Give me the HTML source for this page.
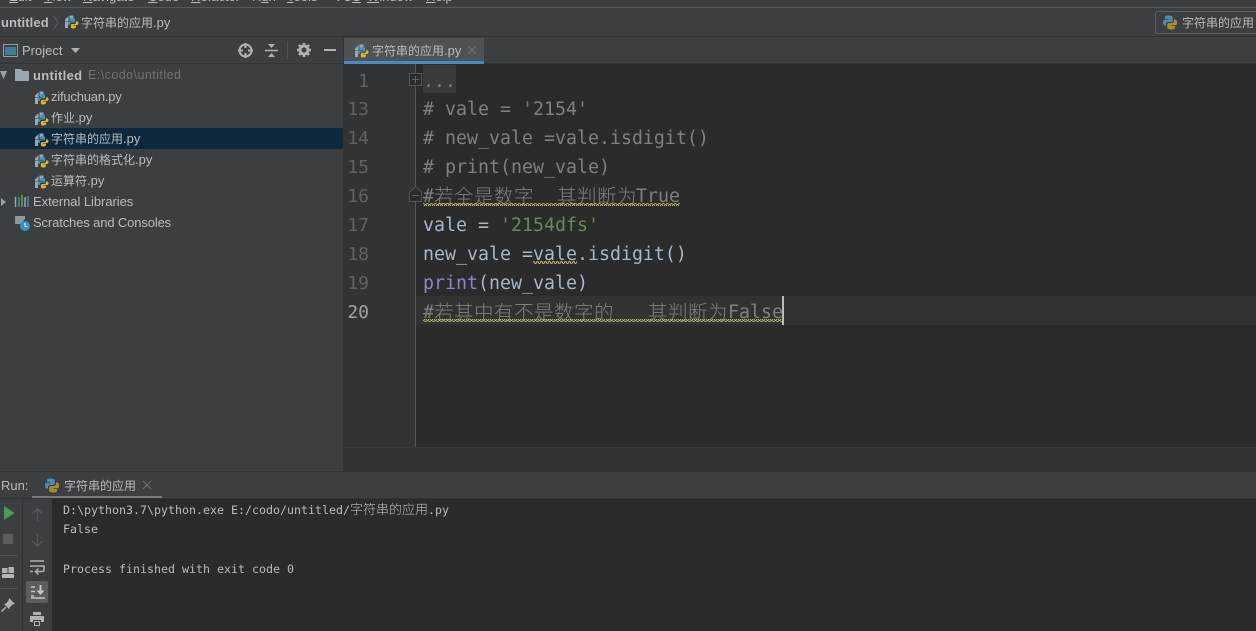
<!DOCTYPE html>
<html><head><meta charset="utf-8"><style>
html,body{margin:0;padding:0;width:1256px;height:631px;overflow:hidden;background:#3c3f41}
.a{position:absolute}
.t{position:absolute;white-space:pre;font-family:"Liberation Sans","Noto Sans CJK SC",sans-serif;font-size:13px;color:#bbb;line-height:21px;letter-spacing:0}
.c{font-size:12px;letter-spacing:0}
.r{position:absolute;left:423px;height:29px;line-height:29px;margin-top:1.500px;white-space:pre;font-family:"DejaVu Sans Mono",monospace;font-size:18.27px;color:#a9b7c6}
.r b{position:absolute;top:-1.500px;font-family:"Noto Sans CJK SC",sans-serif;font-size:19.5px;letter-spacing:.5px;color:#808080;font-weight:300}
.n{position:absolute;left:344px;width:25px;text-align:right;height:29px;line-height:29px;margin-top:1.500px;font-family:"DejaVu Sans Mono",monospace;font-size:18px;color:#606366}
.k{color:#808080}.s{color:#6a8759}.p{color:#8888c6}
.o{position:absolute;left:63px;white-space:pre;font-family:"DejaVu Sans Mono",monospace;font-size:11.63px;line-height:20px;color:#bbb}
.m{position:absolute;top:-11px;font-family:"Liberation Sans",sans-serif;font-size:13px;line-height:15px;color:#bbb;white-space:pre}
svg{position:absolute;overflow:visible}
</style></head><body>
<svg width="0" height="0" style="left:0;top:0"><defs>
<symbol id="py" viewBox="0 0 14 15"><path d="M5 0.5c-2.600 0-3 1-3 2v1.500h3.500v.7H1.500C0 4.700 0 6 0 7.500s.5 3 1.800 3H3V9c0-1.100.9-2 2-2h3c1 0 1.800-.8 1.800-1.800V2.500C9.800 1 8 .5 5 .5z" fill="#4d8bb8"/><path d="M9 14.500c2.600 0 3-1 3-2V11H8.500v-.7h4C14 10.300 14 9 14 7.500s-.5-3-1.800-3H11V6c0 1.100-.9 2-2 2H6c-1 0-1.800.8-1.800 1.800v2.700C4.200 14 6 14.500 9 14.500z" fill="#a88d2f"/></symbol>
<symbol id="f" viewBox="0 0 14 15"><path d="M0 5.500 3.500 2V7H0zM4.500 1.500H8.500V5.500H6C4.800 5.500 4.500 6.500 4.500 7.500H0V14H3V9.500h1.500z" fill="#9aa7b0"/><path d="M8 4c-2.200 0-3 .6-3 1.700V7h3v.5H4C3 7.500 3 8.500 3 9.500S3.500 11 4.300 11H5V10c0-.9.7-1.500 1.500-1.500h2.300c.8 0 1.300-.6 1.300-1.300V5.500C10.100 4.500 9.500 4 8 4z" fill="#3a95c8"/><path d="M8 14.500c2.200 0 3-.6 3-1.700V11.500H8V11h4c1 0 1.500-1 1.500-2s-.5-1.500-1.300-1.500H11V8.500C11 9.400 10.300 10 9.500 10H7.200C6.400 10 5.900 10.600 5.900 11.300v1.700C5.900 14 6.500 14.500 8 14.500z" fill="#e6b422"/></symbol>
<pattern id="w" width="4" height="3" patternUnits="userSpaceOnUse"><path d="M0 2.500 1 .5 2 .5 3 2.500 4 2.500" fill="none" stroke="#b5b565" stroke-width="1.100"/></pattern>
</defs></svg>

<!-- menu -->
<div class="a" style="left:0;top:0;width:1256px;height:7px;background:#3c3f41;overflow:hidden">
<span class="m" style="left:9px"><u>E</u>dit</span><span class="m" style="left:44px"><u>V</u>iew</span><span class="m" style="left:83px"><u>N</u>avigate</span><span class="m" style="left:148px"><u>C</u>ode</span><span class="m" style="left:191px"><u>R</u>efactor</span><span class="m" style="left:252px">R<u>u</u>n</span><span class="m" style="left:287px"><u>T</u>ools</span><span class="m" style="left:334px">VC<u>S</u></span><span class="m" style="left:367px"><u>W</u>indow</span><span class="m" style="left:426px"><u>H</u>elp</span>
</div>
<div class="a" style="left:0;top:7px;width:1256px;height:1px;background:#555758"></div>

<!-- nav -->
<div class="t" style="left:1px;top:12px;font-weight:700;letter-spacing:.1px">untitled</div>
<svg style="left:53px;top:15px" width="6" height="15"><path d="M.5 .5 5 7.500 .5 14.500" fill="none" stroke="#5f6264"/></svg>
<svg style="left:65px;top:14px" width="14" height="15"><use href="#f"/></svg>
<div class="t" style="left:81px;top:12px"><span class="c">字符串的应用</span>.py</div>
<div class="a" style="left:1155px;top:11px;width:110px;height:21px;border:1px solid #5e6162;border-radius:3px"></div>
<svg style="left:1163px;top:15px" width="14" height="15"><use href="#py"/></svg>
<div class="t" style="left:1182px;top:12px"><span class="c">字符串的应用</span></div>
<div class="a" style="left:0;top:36px;width:1256px;height:1px;background:#323232"></div>

<!-- project header -->
<svg style="left:3px;top:44px" width="15" height="13"><rect x=".5" y=".5" width="14" height="12" fill="#3c3f41" stroke="#9a9da0"/><rect x="2" y="3" width="11" height="8" fill="#3d7f9a"/></svg>
<div class="t" style="left:22px;top:40px">Project</div>
<svg style="left:71px;top:48px" width="9" height="5"><path d="M0 0H9L4.500 5z" fill="#afb1b3"/></svg>
<svg style="left:238px;top:43px" width="15" height="15"><circle cx="7.500" cy="7.500" r="6" fill="none" stroke="#afb1b3" stroke-width="2"/><path d="M7.500 0V5M7.500 10V15M0 7.500H5M10 7.500H15" stroke="#afb1b3" stroke-width="2"/></svg>
<svg style="left:265px;top:44px" width="13" height="13"><path d="M0 6.500H13" stroke="#afb1b3" stroke-width="1.500"/><path d="M3 0H10L6.500 4zM3 13H10L6.500 9z" fill="#afb1b3"/></svg>
<div class="a" style="left:287px;top:41px;width:1px;height:18px;background:#505355"></div>
<svg style="left:297px;top:43px" width="14" height="14"><circle cx="7" cy="7" r="4" fill="none" stroke="#afb1b3" stroke-width="3"/><path d="M7 0V3M7 11V14M0 7H3M11 7H14M2 2 4 4M10 10 12 12M12 2 10 4M4 10 2 12" stroke="#afb1b3" stroke-width="2.500"/></svg>
<div class="a" style="left:324px;top:49px;width:12px;height:2px;background:#afb1b3"></div>
<div class="a" style="left:0;top:63px;width:343px;height:1px;background:#323232"></div>

<!-- tree -->
<div class="a" style="left:0;top:128px;width:343px;height:21px;background:#0d293e"></div>
<svg style="left:0;top:71px" width="7" height="9"><path d="M0 0H7L3.500 8z" fill="#9da0a2"/></svg>
<svg style="left:15px;top:69px" width="14" height="12"><path d="M0 0H6L7.500 2H14V12H0z" fill="#9aa7b0"/></svg>
<div class="t" style="left:33px;top:65px;font-weight:700;letter-spacing:.3px">untitled</div>
<div class="t" style="left:88px;top:65px;color:#6f7274;font-size:12.500px;letter-spacing:.45px">E:\codo\untitled</div>
<svg style="left:35px;top:90px" width="14" height="15"><use href="#f"/></svg>
<div class="t" style="left:51px;top:86px;letter-spacing:-.2px">zifuchuan.py</div>
<svg style="left:35px;top:111px" width="14" height="15"><use href="#f"/></svg>
<div class="t" style="left:51px;top:107px"><span class="c">作业</span>.py</div>
<svg style="left:35px;top:132px" width="14" height="15"><use href="#f"/></svg>
<div class="t" style="left:51px;top:128px"><span class="c">字符串的应用</span>.py</div>
<svg style="left:35px;top:153px" width="14" height="15"><use href="#f"/></svg>
<div class="t" style="left:51px;top:149px"><span class="c">字符串的格式化</span>.py</div>
<svg style="left:35px;top:174px" width="14" height="15"><use href="#f"/></svg>
<div class="t" style="left:51px;top:170px"><span class="c">运算符</span>.py</div>
<svg style="left:1px;top:198px" width="5" height="8"><path d="M0 0 5 4 0 8z" fill="#9da0a2"/></svg>
<svg style="left:15px;top:195px" width="14" height="12"><path d="M.5 2V12" stroke="#9aa7b0" stroke-width="1.500"/><path d="M4 2V12" stroke="#3f8f9f" stroke-width="1.500"/><path d="M7 0V12" stroke="#62a45f" stroke-width="1.500"/><path d="M10 2V12" stroke="#9aa7b0" stroke-width="1.500"/><path d="M13 1V12" stroke="#3f8f9f" stroke-width="1.500"/></svg>
<div class="t" style="left:33px;top:191px;letter-spacing:-.05px">External Libraries</div>
<svg style="left:15px;top:216px" width="15" height="15"><path d="M0 0H10V3L6 8H0z" fill="#8d979e"/><circle cx="10" cy="10" r="5" fill="#3592c4"/><path d="M10 7V10.500H12.500" fill="none" stroke="#fff"/></svg>
<div class="t" style="left:33px;top:212px;letter-spacing:-.13px">Scratches and Consoles</div>

<!-- editor tabs -->
<div class="a" style="left:343px;top:37px;width:1px;height:434px;background:#323232"></div>
<div class="a" style="left:344px;top:38px;width:140px;height:23px;background:#4e5254"></div>
<div class="a" style="left:344px;top:61px;width:140px;height:3px;background:#4a88c7"></div>
<div class="a" style="left:484px;top:63px;width:772px;height:1px;background:#323232"></div>
<svg style="left:355px;top:43px" width="14" height="15"><use href="#f"/></svg>
<div class="t" style="left:372px;top:40px"><span class="c">字符串的应用</span>.py</div>
<svg style="left:468px;top:46px" width="8" height="8"><path d="M0 0 8 8M8 0 0 8" stroke="#6f7274"/></svg>

<!-- editor -->
<div class="a" style="left:344px;top:64px;width:912px;height:383px;background:#2b2b2b"></div>
<div class="a" style="left:344px;top:64px;width:71px;height:383px;background:#313335"></div>
<div class="a" style="left:415px;top:64px;width:1px;height:383px;background:#555"></div>
<div class="a" style="left:344px;top:447px;width:912px;height:24px;background:#313335;border-top:1px solid #383a3c;box-sizing:border-box"></div>
<div class="a" style="left:416px;top:296px;width:840px;height:29px;background:#323232"></div>
<div class="a" style="left:423px;top:65px;width:33px;height:28px;background:#3a3a3a"></div>

<div class="n" style="top:65px">1</div>
<div class="n" style="top:93px">13</div>
<div class="n" style="top:122px">14</div>
<div class="n" style="top:151px">15</div>
<div class="n" style="top:180px">16</div>
<div class="n" style="top:209px">17</div>
<div class="n" style="top:238px">18</div>
<div class="n" style="top:267px">19</div>
<div class="n" style="top:296px;color:#a4a3a3">20</div>

<svg style="left:409px;top:73px" width="13" height="13"><rect x=".5" y=".5" width="12" height="12" fill="#2b2b2b" stroke="#555"/><path d="M3 6.500H10M6.500 3V10" stroke="#606366"/></svg>
<svg style="left:409px;top:186px" width="13" height="16"><path d="M.5 15.500V6L6.500 .5 12.500 6V15.500z" fill="#2b2b2b" stroke="#555"/><path d="M3 9.500H10" stroke="#606366"/></svg>

<div class="r k" style="top:65px">...</div>
<div class="r k" style="top:93px"># vale = '2154'</div>
<div class="r k" style="top:122px"># new_vale =vale.isdigit()</div>
<div class="r k" style="top:151px"># print(new_vale)</div>
<div class="r k" style="top:180px">#<b style="left:11px">若全是数字</b><b style="left:134px">其判断为</b><span style="position:absolute;left:213px">True</span></div>
<div class="r" style="top:209px">vale = <span class="s">'2154dfs'</span></div>
<div class="r" style="top:238px">new_vale =vale.isdigit()</div>
<div class="r" style="top:267px"><span class="p">print</span>(new_vale)</div>
<div class="r k" style="top:296px">#<b style="left:11px">若其中有不是数字的</b><b style="left:225px">其判断为</b><span style="position:absolute;left:305px">False</span></div>

<svg style="left:0;top:0" width="1256" height="631">
<rect x="423" y="203" width="257" height="3" fill="url(#w)"/>
<rect x="533" y="261" width="44" height="3" fill="url(#w)"/>
<rect x="423" y="319" width="359" height="3" fill="url(#w)"/>
</svg>
<div class="a" style="left:782px;top:296px;width:1.500px;height:29px;background:#bbb"></div>

<!-- run panel -->
<div class="a" style="left:0;top:471px;width:1256px;height:1px;background:#323232"></div>
<div class="t" style="left:1px;top:475px">Run:</div>
<svg style="left:45px;top:478px" width="14" height="15"><use href="#py"/></svg>
<div class="t" style="left:64px;top:475px"><span class="c">字符串的应用</span></div>
<svg style="left:143px;top:481px" width="8" height="8"><path d="M0 0 8 8M8 0 0 8" stroke="#6f7274"/></svg>
<div class="a" style="left:32px;top:496px;width:130px;height:3px;background:#747a80"></div>
<div class="a" style="left:0;top:498px;width:1256px;height:1px;background:#323232"></div>
<div class="a" style="left:22px;top:499px;width:1px;height:132px;background:#323232"></div>
<div class="a" style="left:52px;top:499px;width:1204px;height:132px;background:#2b2b2b"></div>

<svg style="left:4px;top:506px" width="11" height="14"><path d="M0 0 10.500 7 0 14z" fill="#499c54"/></svg>
<div class="a" style="left:3px;top:534px;width:10px;height:10px;background:#5a5d5f"></div>
<div class="a" style="left:0;top:555px;width:18px;height:1px;background:#515355"></div>
<svg style="left:2px;top:567px" width="12" height="11"><path d="M0 1H5.500V6H0zM6.500 0H12V6H6.500zM0 7H12V11H0z" fill="#afb1b3"/></svg>
<div class="a" style="left:0;top:588px;width:18px;height:1px;background:#515355"></div>
<svg style="left:1px;top:598px" width="14" height="14"><path d="M8 0 14 6 11.500 6.500 8.500 9.500 8.500 11.500 3 6 5 5.500 7.500 2.500z" fill="#afb1b3"/><path d="M5 9 .5 13.500" stroke="#afb1b3" stroke-width="1.500"/></svg>

<svg style="left:32px;top:508px" width="11" height="13"><path d="M5.500 13V1M.5 6 5.500 1 10.500 6" fill="none" stroke="#55585a" stroke-width="1.500"/></svg>
<svg style="left:32px;top:534px" width="11" height="13"><path d="M5.500 0V12M.5 7 5.500 12 10.500 7" fill="none" stroke="#55585a" stroke-width="1.500"/></svg>
<svg style="left:30px;top:560px" width="15" height="14"><path d="M0 1H14M0 6H14V9.500C14 11 13 11.500 12 11.500H6M0 11.500H3" fill="none" stroke="#afb1b3" stroke-width="1.500"/><path d="M8.500 8.500 5.500 11.500 8.500 14.500" fill="none" stroke="#afb1b3" stroke-width="1.500"/></svg>
<div class="a" style="left:26px;top:581px;width:22px;height:22px;border-radius:2px;background:#5a5e60"></div>
<svg style="left:31px;top:585px" width="14" height="14"><path d="M0 2H4M0 6.500H4M0 11H3M0 13H14" stroke="#c4c6c8" stroke-width="1.500"/><path d="M9.500 0V8" stroke="#c4c6c8" stroke-width="2"/><path d="M5.500 5.500H13.500L9.500 10z" fill="#c4c6c8"/></svg>
<svg style="left:30px;top:612px" width="14" height="14"><path d="M3 0H11V3H3zM0 4H14V10H11V8H3V10H0zM4 9H10V14H4z" fill="#afb1b3"/><path d="M5 10H9V13H5z" fill="#3c3f41"/></svg>

<div class="o" style="top:499px">D:\python3.7\python.exe E:/codo/untitled/<span style="font-family:'Noto Sans CJK SC',sans-serif;font-size:13px;font-weight:300">字符串的应用</span>.py</div>
<div class="o" style="top:519px">False</div>
<div class="o" style="top:559px">Process finished with exit code 0</div>
</body></html>
